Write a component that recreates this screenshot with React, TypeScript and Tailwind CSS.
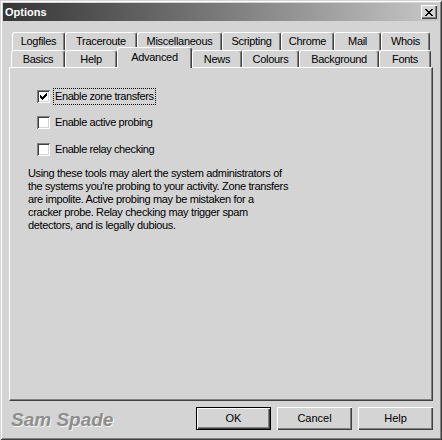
import React from "react";

const row1 = [
  { label: "Logfiles", w: 53 },
  { label: "Traceroute", w: 72 },
  { label: "Miscellaneous", w: 85 },
  { label: "Scripting", w: 59 },
  { label: "Chrome", w: 53 },
  { label: "Mail", w: 47 },
  { label: "Whois", w: 49 },
];

const row2 = [
  { label: "Basics", w: 54 },
  { label: "Help", w: 52 },
  { label: "Advanced", w: 75, sel: true },
  { label: "News", w: 50 },
  { label: "Colours", w: 57 },
  { label: "Background", w: 80 },
  { label: "Fonts", w: 52 },
];

function Tab({ label, w, sel, h }: { label: string; w: number; sel?: boolean; h: string }) {
  if (sel) {
    return (
      <div
        className="relative z-10 -mb-[1px] h-[21px] flex items-center justify-center bg-[#d4d4d4] border-l border-t border-white border-r border-r-[#404040] rounded-t-[3px] shadow-[inset_-1px_0_0_#808080] tracking-[-0.3px] pb-[1px]"
        style={{ width: w }}
      >
        {label}
      </div>
    );
  }
  return (
    <div
      className={`${h} flex items-center justify-center bg-[#d4d4d4] border-l border-t border-white border-r border-r-[#404040] rounded-t-[3px] shadow-[inset_-1px_0_0_#808080] tracking-[-0.3px]`}
      style={{ width: w }}
    >
      {label}
    </div>
  );
}

function Check() {
  return (
    <svg width="7" height="7" viewBox="0 0 7 7" shapeRendering="crispEdges" className="block">
      <rect x="6" y="0" width="1" height="1" fill="#000" />
      <rect x="5" y="1" width="2" height="1" fill="#000" />
      <rect x="0" y="2" width="1" height="1" fill="#000" />
      <rect x="4" y="2" width="3" height="1" fill="#000" />
      <rect x="0" y="3" width="2" height="1" fill="#000" />
      <rect x="3" y="3" width="3" height="1" fill="#000" />
      <rect x="0" y="4" width="5" height="1" fill="#000" />
      <rect x="1" y="5" width="3" height="1" fill="#000" />
      <rect x="2" y="6" width="1" height="1" fill="#000" />
    </svg>
  );
}

function CheckRow({ label, checked, focus, mt }: { label: string; checked?: boolean; focus?: boolean; mt: string }) {
  return (
    <div className={`${mt} h-[17px] flex items-center`}>
      <div className="w-[13px] h-[13px] bg-white flex items-center justify-center shadow-[inset_1px_1px_0_#808080,inset_-1px_-1px_0_#ffffff,inset_2px_2px_0_#404040,inset_-2px_-2px_0_#d4d4d4]">
        {checked && <Check />}
      </div>
      <div
        className={`ml-[3px] h-[17px] flex items-center px-[1px] border ${focus ? "border-dotted border-black" : "border-transparent"} tracking-[-0.4px]`}
      >
        {label}
      </div>
    </div>
  );
}

function Button({ label, def }: { label: string; def?: boolean }) {
  if (def) {
    return (
      <div className="w-[75px] h-[23px] border border-black bg-[#d4d4d4] flex items-center justify-center shadow-[inset_1px_1px_0_#ffffff,inset_-1px_-1px_0_#404040,inset_-2px_-2px_0_#808080]">
        {label}
      </div>
    );
  }
  return (
    <div className="w-[75px] h-[23px] bg-[#d4d4d4] flex items-center justify-center shadow-[inset_1px_1px_0_#ffffff,inset_-1px_-1px_0_#404040,inset_-2px_-2px_0_#808080]">
      {label}
    </div>
  );
}

export default function App() {
  return (
    <div
      className="w-[442px] h-[440px] bg-[#d4d4d4] p-[3px] flex flex-col text-[11px] text-black shadow-[inset_1px_1px_0_#d4d4d4,inset_-1px_-1px_0_#404040,inset_2px_2px_0_#ffffff,inset_-2px_-2px_0_#808080]"
      style={{ fontFamily: '"Liberation Sans", Arial, sans-serif' }}
    >
      {/* Title bar */}
      <div className="h-[18px] flex items-center justify-between pl-[2px] pr-[2px] bg-linear-to-r from-[#363636] to-[#c8c8c8]">
        <span className="text-white font-bold text-[11px] leading-none">Options</span>
        <div className="w-[16px] h-[14px] bg-[#d4d4d4] flex items-center justify-center shadow-[inset_1px_1px_0_#ffffff,inset_-1px_-1px_0_#404040,inset_-2px_-2px_0_#808080]">
          <svg width="8" height="7" viewBox="0 0 8 7" shapeRendering="crispEdges" className="block">
            <path d="M0 0h2v1h1v1h2v-1h1v-1h2v1h-1v1h-1v1h-1v1h1v1h1v1h1v1h-2v-1h-1v-1h-2v1h-1v1h-2v-1h1v-1h1v-1h1v-1h-1v-1h-1v-1h-1z" fill="#000" />
          </svg>
        </div>
      </div>

      {/* Tab control */}
      <div className="ml-[6px] mt-[11px] w-[424px]">
        <div className="flex h-[18px] pl-[3px]">
          {row1.map((t) => (
            <Tab key={t.label} label={t.label} w={t.w} h="h-[18px]" />
          ))}
        </div>
        <div className="flex h-[17px] items-end pl-[2px]">
          {row2.map((t) => (
            <Tab key={t.label} label={t.label} w={t.w} sel={t.sel} h="h-[17px]" />
          ))}
        </div>
        <div className="h-[334px] border-l border-t border-white border-r border-b border-r-[#404040] border-b-[#404040] shadow-[inset_-1px_-1px_0_#808080] pt-[20px] pl-[27px]">
          <CheckRow label="Enable zone transfers" checked focus mt="mt-0" />
          <CheckRow label="Enable active probing" mt="mt-[9px]" />
          <CheckRow label="Enable relay checking" mt="mt-[10px]" />
          <p className="-ml-[9px] mt-[9px] leading-[13px] tracking-[-0.35px] whitespace-nowrap">
            Using these tools may alert the system administrators of
            <br />
            the systems you're probing to your activity. Zone transfers
            <br />
            are impolite. Active probing may be mistaken for a
            <br />
            cracker probe. Relay checking may trigger spam
            <br />
            detectors, and is legally dubious.
          </p>
        </div>
      </div>

      {/* Bottom */}
      <div className="mt-[6px] flex items-start">
        <div
          className="pl-[8px] mt-[1px] h-[23px] leading-[23px] text-[19px] font-bold italic text-[#8e8e8e] [text-shadow:1px_1px_0_#f4f4f4]"
          style={{ fontFamily: '"Liberation Sans", Arial, sans-serif' }}
        >
          Sam Spade
        </div>
        <div className="ml-auto mr-[6px] flex gap-[6px]">
          <Button label="OK" def />
          <Button label="Cancel" />
          <Button label="Help" />
        </div>
      </div>
    </div>
  );
}
